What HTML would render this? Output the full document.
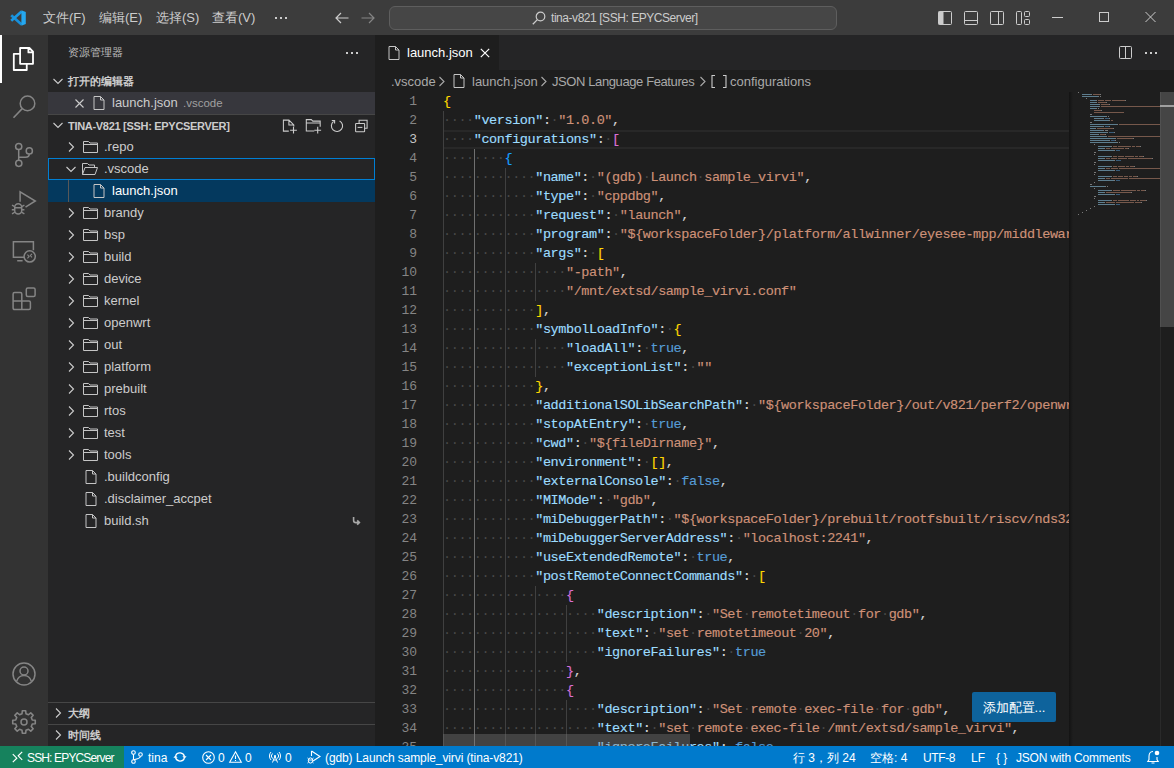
<!DOCTYPE html>
<html><head><meta charset="utf-8">
<style>
*{margin:0;padding:0;box-sizing:border-box}
html,body{width:1174px;height:768px;overflow:hidden;background:#1e1e1e;font-family:"Liberation Sans",sans-serif;color:#cccccc}
.abs{position:absolute}
svg{position:absolute;overflow:visible}
#title{position:absolute;left:0;top:0;width:1174px;height:35px;background:#3c3c3c}
.menu{position:absolute;top:0;height:35px;line-height:35px;font-size:13px;color:#cccccc}
#act{position:absolute;left:0;top:35px;width:48px;height:711px;background:#333333}
#side{position:absolute;left:48px;top:35px;width:327px;height:711px;background:#252526}
#tabs{position:absolute;left:375px;top:35px;width:799px;height:35px;background:#252526}
#status{position:absolute;left:0;top:746px;width:1174px;height:22px;background:#007acc;color:#ffffff;font-size:12px}
.st{position:absolute;top:1px;height:22px;line-height:22px;white-space:nowrap}
.row{position:absolute;left:0;width:327px;height:22px;line-height:22px;font-size:13px;color:#cccccc;white-space:nowrap}
.lbl{position:absolute;top:0}
.hdr .lbl{top:0}
.hdr{position:absolute;left:0;width:327px;height:22px;line-height:22px;font-size:11px;font-weight:bold;color:#cccccc;white-space:nowrap}
.ln{position:absolute;left:68px;height:19px;line-height:19px;font-family:"Liberation Mono",monospace;font-size:13.5px;letter-spacing:-0.42px;white-space:pre;color:#d4d4d4;-webkit-text-stroke:0.15px currentColor}
.ln i{font-style:normal;color:#484848;-webkit-text-stroke:0}
.num{position:absolute;left:380px;width:37px;text-align:right;height:19px;line-height:19px;font-family:"Liberation Mono",monospace;font-size:13px;color:#858585}
.num.act{color:#c6c6c6}
.guide{position:absolute;width:1px;background:#404040}
.guide.act{background:#707070}
.mm{position:absolute;height:1px;opacity:0.5}
#clip{position:absolute;left:375px;top:92px;width:694px;height:654px;overflow:hidden}
</style></head><body>

<!-- TITLE BAR -->
<div id="title">
  <svg style="left:10px;top:10px" width="16" height="16" viewBox="0 0 16 16"><path d="M1.2 5.2 L11.6 14.6" stroke="#1790dc" stroke-width="2.7"/><path d="M1.2 10.8 L11.6 1.4" stroke="#1a98e4" stroke-width="2.7"/><path d="M11.4 0.2 L15.8 2 V14 L11.4 15.8 Z" fill="#25a8f0"/></svg>
  <div class="menu" style="left:43px">文件(F)</div>
  <div class="menu" style="left:99px">编辑(E)</div>
  <div class="menu" style="left:156px">选择(S)</div>
  <div class="menu" style="left:212px">查看(V)</div>
  <svg style="left:275px;top:17px" width="12" height="2" viewBox="0 0 12 2"><rect x="0" y="0" width="2" height="2" fill="#cccccc"/><rect x="5" y="0" width="2" height="2" fill="#cccccc"/><rect x="10" y="0" width="2" height="2" fill="#cccccc"/></svg>
  <svg style="left:335px;top:12px" width="14" height="12" viewBox="0 0 14 12"><path d="M6 1 L1 6 L6 11 M1 6 H13.5" stroke="#cccccc" stroke-width="1.2" fill="none"/></svg>
  <svg style="left:361px;top:12px" width="14" height="12" viewBox="0 0 14 12"><path d="M8 1 L13 6 L8 11 M13 6 H0.5" stroke="#858585" stroke-width="1.2" fill="none"/></svg>
  <div class="abs" style="left:389px;top:6px;width:448px;height:24px;border:1px solid #5e5e5e;border-radius:6px;background:#464646"></div>
  <svg style="left:532px;top:11px" width="14" height="14" viewBox="0 0 14 14"><circle cx="8.5" cy="5.5" r="4.3" stroke="#cccccc" stroke-width="1.2" fill="none"/><path d="M5.4 8.6 L0.8 13.2" stroke="#cccccc" stroke-width="1.3"/></svg>
  <div class="menu" style="left:551px;top:1px;font-size:12px;letter-spacing:-0.45px">tina-v821 [SSH: EPYCServer]</div>
  <!-- layout icons -->
  <svg style="left:938px;top:11px" width="14" height="14" viewBox="0 0 14 14"><rect x="0.5" y="0.5" width="13" height="13" rx="1" stroke="#cccccc" fill="none"/><rect x="0.5" y="0.5" width="5" height="13" fill="#cccccc"/></svg>
  <svg style="left:964px;top:11px" width="14" height="14" viewBox="0 0 14 14"><rect x="0.5" y="0.5" width="13" height="13" rx="1" stroke="#cccccc" fill="none"/><path d="M0.5 9.5 H13.5" stroke="#cccccc"/></svg>
  <svg style="left:990px;top:11px" width="14" height="14" viewBox="0 0 14 14"><rect x="0.5" y="0.5" width="13" height="13" rx="1" stroke="#cccccc" fill="none"/><path d="M8.5 0.5 V13.5" stroke="#cccccc"/></svg>
  <svg style="left:1016px;top:11px" width="14" height="14" viewBox="0 0 14 14"><rect x="0.5" y="0.5" width="5" height="13" rx="1" stroke="#cccccc" fill="none"/><rect x="8.5" y="0.5" width="5" height="5" rx="1" stroke="#cccccc" fill="none"/><rect x="8.5" y="8.5" width="5" height="5" rx="1" stroke="#cccccc" fill="none"/></svg>
  <svg style="left:1052px;top:17px" width="11" height="1" viewBox="0 0 11 1"><path d="M0 0.5 H11" stroke="#cccccc"/></svg>
  <svg style="left:1099px;top:12px" width="10" height="10" viewBox="0 0 10 10"><rect x="0.5" y="0.5" width="9" height="9" stroke="#cccccc" fill="none"/></svg>
  <svg style="left:1145px;top:12px" width="11" height="10" viewBox="0 0 11 10"><path d="M0.5 0 L10.5 10 M10.5 0 L0.5 10" stroke="#cccccc" fill="none"/></svg>
</div>

<!-- ACTIVITY BAR -->
<div id="act">
  <div class="abs" style="left:0;top:0;width:2px;height:48px;background:#ffffff"></div>
  <svg style="left:12px;top:12px" width="24" height="24" viewBox="0 0 24 24"><path d="M8.1 1 H17.4 L21 4.6 V16.8 H8.1 Z M16.4 1 V5.4 H21 M8.1 6.8 H1.8 V23 H14.75 V16.8" stroke="#ffffff" stroke-width="1.8" fill="none" stroke-linejoin="round"/></svg>
  <svg style="left:12px;top:60px" width="24" height="24" viewBox="0 0 24 24"><circle cx="15.5" cy="8.4" r="7.3" stroke="#858585" stroke-width="1.5" fill="none"/><path d="M10.2 13.6 L1.5 22.8" stroke="#858585" stroke-width="1.6"/></svg>
  <svg style="left:12px;top:108px" width="24" height="24" viewBox="0 0 24 24"><circle cx="6.7" cy="3.5" r="3.1" stroke="#858585" stroke-width="1.5" fill="none"/><circle cx="6.8" cy="20.3" r="3.1" stroke="#858585" stroke-width="1.5" fill="none"/><circle cx="17.3" cy="7.9" r="3.1" stroke="#858585" stroke-width="1.5" fill="none"/><path d="M6.7 6.6 V17.2 M17.3 11 Q17.3 14.2 13.5 14.2 H6.7" stroke="#858585" stroke-width="1.5" fill="none"/></svg>
  <svg style="left:12px;top:156px" width="24" height="24" viewBox="0 0 24 24"><path d="M8.1 10.8 V0.9 L23.3 10 L13.5 16.2" stroke="#858585" stroke-width="1.5" fill="none" stroke-linejoin="miter"/><rect x="2.7" y="12.7" width="7" height="10.4" rx="3.5" stroke="#858585" stroke-width="1.5" fill="none"/><path d="M2.7 16.7 H9.7 M0 14.2 L2.7 15.6 M12.4 14.2 L9.7 15.6 M-0.2 18.8 H2.7 M9.7 18.8 H12.4 M0 22.8 L2.9 21.2 M12.4 22.8 L9.5 21.2" stroke="#858585" stroke-width="1.4" fill="none"/></svg>
  <svg style="left:12px;top:205px" width="24" height="24" viewBox="0 0 24 24"><path d="M12 17.25 H1.4 V1.8 H21.4 V10.2 M5.2 20.8 H10.6" stroke="#858585" stroke-width="1.5" fill="none"/><circle cx="17.7" cy="16.4" r="5.6" stroke="#858585" stroke-width="1.5" fill="none"/><path d="M15.4 14.6 L17.1 16.4 L15.4 18.3 M20 13.8 L18.3 15.6 L20 17.4" stroke="#858585" stroke-width="1.1" fill="none"/></svg>
  <svg style="left:12px;top:252px" width="24" height="24" viewBox="0 0 24 24"><path d="M2.6 5.4 H8.3 Q9.8 5.4 9.8 6.9 V14.1 H17 Q18.4 14.1 18.4 15.5 V21.1 Q18.4 22.6 17 22.6 H2.6 Q1.1 22.6 1.1 21.1 V6.9 Q1.1 5.4 2.6 5.4 Z M1.1 14.1 H9.8 V22.6" stroke="#858585" stroke-width="1.5" fill="none"/><rect x="14.3" y="1" width="8.8" height="8.5" rx="1.5" stroke="#858585" stroke-width="1.5" fill="none"/></svg>
  <svg style="left:12px;top:627px" width="24" height="24" viewBox="0 0 24 24"><circle cx="12" cy="12" r="11" stroke="#858585" stroke-width="1.5" fill="none"/><circle cx="12" cy="9" r="4" stroke="#858585" stroke-width="1.5" fill="none"/><path d="M4.5 19.5 C6 15 9 13.5 12 13.5 C15 13.5 18 15 19.5 19.5" stroke="#858585" stroke-width="1.5" fill="none"/></svg>
  <svg style="left:12px;top:675px" width="24" height="24" viewBox="0 0 24 24"><path d="M10.02 3.73 L10.31 0.73 L13.69 0.73 L13.98 3.73 L16.44 4.75 L18.77 2.83 L21.17 5.23 L19.25 7.56 L20.27 10.02 L23.27 10.31 L23.27 13.69 L20.27 13.98 L19.25 16.44 L21.17 18.77 L18.77 21.17 L16.44 19.25 L13.98 20.27 L13.69 23.27 L10.31 23.27 L10.02 20.27 L7.56 19.25 L5.23 21.17 L2.83 18.77 L4.75 16.44 L3.73 13.98 L0.73 13.69 L0.73 10.31 L3.73 10.02 L4.75 7.56 L2.83 5.23 L5.23 2.83 L7.56 4.75 Z" stroke="#858585" stroke-width="1.6" fill="none" stroke-linejoin="round"/><circle cx="12" cy="12" r="3" stroke="#858585" stroke-width="1.5" fill="none"/></svg>
</div>

<!-- SIDEBAR -->
<div id="side">
  <div class="abs" style="left:20px;top:0;height:35px;line-height:35px;font-size:11px;color:#bbbbbb">资源管理器</div>
  <svg style="left:298px;top:17px" width="12" height="2" viewBox="0 0 12 2"><rect x="0" y="0" width="2" height="2" fill="#cccccc"/><rect x="5" y="0" width="2" height="2" fill="#cccccc"/><rect x="10" y="0" width="2" height="2" fill="#cccccc"/></svg>
  <div class="hdr" style="top:35px">
    <svg style="left:2px;top:3px" width="16" height="16" viewBox="0 0 16 16"><path d="M3.5 6 L8 10.5 L12.5 6" stroke="#cccccc" stroke-width="1.1" fill="none"/></svg>
    <span class="lbl" style="left:20px">打开的编辑器</span>
  </div>
  <div class="row" style="top:57px;background:#37373d">
    <svg style="left:27px;top:7px" width="9" height="9" viewBox="0 0 9 9"><path d="M0.5 0.5 L8.5 8.5 M8.5 0.5 L0.5 8.5" stroke="#cccccc" stroke-width="1.1" fill="none"/></svg>
    <svg style="left:45px;top:4px" width="12" height="14" viewBox="0 0 12 14"><path d="M1 0.5 H7.5 L11 4 V13.5 H1 Z M7.5 0.5 V4 H11" stroke="#c5c5c5" stroke-width="1" fill="none"/></svg>
    <span class="lbl" style="left:64px">launch.json</span>
    <span class="lbl" style="left:135px;font-size:11.5px;color:#a0a0a0">.vscode</span>
  </div>
  <div class="abs" style="left:0;top:79px;width:327px;height:1px;background:#464646"></div>
  <div class="hdr" style="top:79px">
    <svg style="left:2px;top:3px" width="16" height="16" viewBox="0 0 16 16"><path d="M3.5 6 L8 10.5 L12.5 6" stroke="#cccccc" stroke-width="1.1" fill="none"/></svg>
    <span class="lbl" style="left:20px;top:1px;letter-spacing:-0.3px">TINA-V821 [SSH: EPYCSERVER]</span>
    <svg style="left:234px;top:4px" width="16" height="16" viewBox="0 0 16 16"><path d="M6.8 13.1 H1.4 V2.1 H6.9 L11.8 7 V8.6 M6.9 2.1 V7 H11.8" stroke="#cccccc" stroke-width="1.05" fill="none"/><path d="M11.5 8.8 V15.6 M8.1 12.2 H14.9" stroke="#cccccc" stroke-width="1.1"/></svg>
    <svg style="left:257px;top:4px" width="17" height="16" viewBox="0 0 17 16"><path d="M9.3 13 H1.3 V1.6 H6.3 L7.8 3.1 H15.2 V8.8 M1.3 4.9 H15.2" stroke="#cccccc" stroke-width="1.05" fill="none"/><path d="M12.7 8.8 V15.6 M9.3 12.2 H16.1" stroke="#cccccc" stroke-width="1.1"/></svg>
    <svg style="left:282px;top:4px" width="15" height="16" viewBox="0 0 15 16"><path d="M3.6 3.4 A5.6 5.6 0 1 0 9.6 2.9" stroke="#cccccc" stroke-width="1.1" fill="none"/><path d="M1.8 2.5 H4.6 V5.4" stroke="#cccccc" stroke-width="1.1" fill="none"/></svg>
    <svg style="left:307px;top:5px" width="14" height="14" viewBox="0 0 14 14"><path d="M4.1 3.9 V1.3 H12.1 V9.3 H9.6" stroke="#cccccc" stroke-width="1.05" fill="none"/><rect x="0.6" y="4.5" width="9" height="8.3" rx="0.6" stroke="#cccccc" stroke-width="1.05" fill="none"/><path d="M2.6 8.4 H7.4" stroke="#cccccc" stroke-width="1.05"/></svg>
  </div>
  <div class="row" style="top:101px;"><svg style="left:15px;top:3px" width="16" height="16" viewBox="0 0 16 16"><path d="M6 3.5 L10.5 8 L6 12.5" stroke="#cccccc" stroke-width="1.1" fill="none"/></svg><svg style="left:35px;top:5px" width="15" height="12" viewBox="0 0 15 12"><path d="M0.5 0.5 H5.5 L7 2 H14.5 V11.5 H0.5 Z M0.5 3.5 H14.5" stroke="#c5c5c5" stroke-width="1" fill="none"/></svg><span class="lbl" style="left:56px">.repo</span></div>
  <div class="row" style="top:123px;outline:1px solid #007fd4;outline-offset:-1px;"><svg style="left:15px;top:3px" width="16" height="16" viewBox="0 0 16 16"><path d="M3.5 6 L8 10.5 L12.5 6" stroke="#cccccc" stroke-width="1.1" fill="none"/></svg><svg style="left:34px;top:5px" width="16" height="12" viewBox="0 0 16 12"><path d="M0.5 11.5 V0.5 H5.5 L7 2 H12.5 V4.5 M0.5 11.5 L3 4.5 H15.5 L13 11.5 Z" stroke="#c5c5c5" stroke-width="1" fill="none"/></svg><span class="lbl" style="left:56px">.vscode</span></div>
  <div class="row" style="top:145px;background:#04395e;"><div class="abs" style="left:20px;top:0;width:1px;height:22px;background:#585858"></div><svg style="left:45px;top:4px" width="12" height="14" viewBox="0 0 12 14"><path d="M1 0.5 H7.5 L11 4 V13.5 H1 Z M7.5 0.5 V4 H11" stroke="#c5c5c5" stroke-width="1" fill="none"/></svg><span class="lbl" style="left:64px;color:#ffffff">launch.json</span></div>
  <div class="row" style="top:167px;"><svg style="left:15px;top:3px" width="16" height="16" viewBox="0 0 16 16"><path d="M6 3.5 L10.5 8 L6 12.5" stroke="#cccccc" stroke-width="1.1" fill="none"/></svg><svg style="left:35px;top:5px" width="15" height="12" viewBox="0 0 15 12"><path d="M0.5 0.5 H5.5 L7 2 H14.5 V11.5 H0.5 Z M0.5 3.5 H14.5" stroke="#c5c5c5" stroke-width="1" fill="none"/></svg><span class="lbl" style="left:56px">brandy</span></div>
  <div class="row" style="top:189px;"><svg style="left:15px;top:3px" width="16" height="16" viewBox="0 0 16 16"><path d="M6 3.5 L10.5 8 L6 12.5" stroke="#cccccc" stroke-width="1.1" fill="none"/></svg><svg style="left:35px;top:5px" width="15" height="12" viewBox="0 0 15 12"><path d="M0.5 0.5 H5.5 L7 2 H14.5 V11.5 H0.5 Z M0.5 3.5 H14.5" stroke="#c5c5c5" stroke-width="1" fill="none"/></svg><span class="lbl" style="left:56px">bsp</span></div>
  <div class="row" style="top:211px;"><svg style="left:15px;top:3px" width="16" height="16" viewBox="0 0 16 16"><path d="M6 3.5 L10.5 8 L6 12.5" stroke="#cccccc" stroke-width="1.1" fill="none"/></svg><svg style="left:35px;top:5px" width="15" height="12" viewBox="0 0 15 12"><path d="M0.5 0.5 H5.5 L7 2 H14.5 V11.5 H0.5 Z M0.5 3.5 H14.5" stroke="#c5c5c5" stroke-width="1" fill="none"/></svg><span class="lbl" style="left:56px">build</span></div>
  <div class="row" style="top:233px;"><svg style="left:15px;top:3px" width="16" height="16" viewBox="0 0 16 16"><path d="M6 3.5 L10.5 8 L6 12.5" stroke="#cccccc" stroke-width="1.1" fill="none"/></svg><svg style="left:35px;top:5px" width="15" height="12" viewBox="0 0 15 12"><path d="M0.5 0.5 H5.5 L7 2 H14.5 V11.5 H0.5 Z M0.5 3.5 H14.5" stroke="#c5c5c5" stroke-width="1" fill="none"/></svg><span class="lbl" style="left:56px">device</span></div>
  <div class="row" style="top:255px;"><svg style="left:15px;top:3px" width="16" height="16" viewBox="0 0 16 16"><path d="M6 3.5 L10.5 8 L6 12.5" stroke="#cccccc" stroke-width="1.1" fill="none"/></svg><svg style="left:35px;top:5px" width="15" height="12" viewBox="0 0 15 12"><path d="M0.5 0.5 H5.5 L7 2 H14.5 V11.5 H0.5 Z M0.5 3.5 H14.5" stroke="#c5c5c5" stroke-width="1" fill="none"/></svg><span class="lbl" style="left:56px">kernel</span></div>
  <div class="row" style="top:277px;"><svg style="left:15px;top:3px" width="16" height="16" viewBox="0 0 16 16"><path d="M6 3.5 L10.5 8 L6 12.5" stroke="#cccccc" stroke-width="1.1" fill="none"/></svg><svg style="left:35px;top:5px" width="15" height="12" viewBox="0 0 15 12"><path d="M0.5 0.5 H5.5 L7 2 H14.5 V11.5 H0.5 Z M0.5 3.5 H14.5" stroke="#c5c5c5" stroke-width="1" fill="none"/></svg><span class="lbl" style="left:56px">openwrt</span></div>
  <div class="row" style="top:299px;"><svg style="left:15px;top:3px" width="16" height="16" viewBox="0 0 16 16"><path d="M6 3.5 L10.5 8 L6 12.5" stroke="#cccccc" stroke-width="1.1" fill="none"/></svg><svg style="left:35px;top:5px" width="15" height="12" viewBox="0 0 15 12"><path d="M0.5 0.5 H5.5 L7 2 H14.5 V11.5 H0.5 Z M0.5 3.5 H14.5" stroke="#c5c5c5" stroke-width="1" fill="none"/></svg><span class="lbl" style="left:56px">out</span></div>
  <div class="row" style="top:321px;"><svg style="left:15px;top:3px" width="16" height="16" viewBox="0 0 16 16"><path d="M6 3.5 L10.5 8 L6 12.5" stroke="#cccccc" stroke-width="1.1" fill="none"/></svg><svg style="left:35px;top:5px" width="15" height="12" viewBox="0 0 15 12"><path d="M0.5 0.5 H5.5 L7 2 H14.5 V11.5 H0.5 Z M0.5 3.5 H14.5" stroke="#c5c5c5" stroke-width="1" fill="none"/></svg><span class="lbl" style="left:56px">platform</span></div>
  <div class="row" style="top:343px;"><svg style="left:15px;top:3px" width="16" height="16" viewBox="0 0 16 16"><path d="M6 3.5 L10.5 8 L6 12.5" stroke="#cccccc" stroke-width="1.1" fill="none"/></svg><svg style="left:35px;top:5px" width="15" height="12" viewBox="0 0 15 12"><path d="M0.5 0.5 H5.5 L7 2 H14.5 V11.5 H0.5 Z M0.5 3.5 H14.5" stroke="#c5c5c5" stroke-width="1" fill="none"/></svg><span class="lbl" style="left:56px">prebuilt</span></div>
  <div class="row" style="top:365px;"><svg style="left:15px;top:3px" width="16" height="16" viewBox="0 0 16 16"><path d="M6 3.5 L10.5 8 L6 12.5" stroke="#cccccc" stroke-width="1.1" fill="none"/></svg><svg style="left:35px;top:5px" width="15" height="12" viewBox="0 0 15 12"><path d="M0.5 0.5 H5.5 L7 2 H14.5 V11.5 H0.5 Z M0.5 3.5 H14.5" stroke="#c5c5c5" stroke-width="1" fill="none"/></svg><span class="lbl" style="left:56px">rtos</span></div>
  <div class="row" style="top:387px;"><svg style="left:15px;top:3px" width="16" height="16" viewBox="0 0 16 16"><path d="M6 3.5 L10.5 8 L6 12.5" stroke="#cccccc" stroke-width="1.1" fill="none"/></svg><svg style="left:35px;top:5px" width="15" height="12" viewBox="0 0 15 12"><path d="M0.5 0.5 H5.5 L7 2 H14.5 V11.5 H0.5 Z M0.5 3.5 H14.5" stroke="#c5c5c5" stroke-width="1" fill="none"/></svg><span class="lbl" style="left:56px">test</span></div>
  <div class="row" style="top:409px;"><svg style="left:15px;top:3px" width="16" height="16" viewBox="0 0 16 16"><path d="M6 3.5 L10.5 8 L6 12.5" stroke="#cccccc" stroke-width="1.1" fill="none"/></svg><svg style="left:35px;top:5px" width="15" height="12" viewBox="0 0 15 12"><path d="M0.5 0.5 H5.5 L7 2 H14.5 V11.5 H0.5 Z M0.5 3.5 H14.5" stroke="#c5c5c5" stroke-width="1" fill="none"/></svg><span class="lbl" style="left:56px">tools</span></div>
  <div class="row" style="top:431px;"><svg style="left:37px;top:4px" width="12" height="14" viewBox="0 0 12 14"><path d="M1 0.5 H7.5 L11 4 V13.5 H1 Z M7.5 0.5 V4 H11" stroke="#c5c5c5" stroke-width="1" fill="none"/></svg><span class="lbl" style="left:56px">.buildconfig</span></div>
  <div class="row" style="top:453px;"><svg style="left:37px;top:4px" width="12" height="14" viewBox="0 0 12 14"><path d="M1 0.5 H7.5 L11 4 V13.5 H1 Z M7.5 0.5 V4 H11" stroke="#c5c5c5" stroke-width="1" fill="none"/></svg><span class="lbl" style="left:56px">.disclaimer_accpet</span></div>
  <div class="row" style="top:475px;"><svg style="left:37px;top:4px" width="12" height="14" viewBox="0 0 12 14"><path d="M1 0.5 H7.5 L11 4 V13.5 H1 Z M7.5 0.5 V4 H11" stroke="#c5c5c5" stroke-width="1" fill="none"/></svg><span class="lbl" style="left:56px">build.sh</span><svg style="left:304px;top:6px" width="9" height="10" viewBox="0 0 9 10"><path d="M1.6 1 V4.2 Q1.6 6.6 4 6.6 H7.2 M5.2 4.4 L7.4 6.6 L5.2 8.8" stroke="#a8a8a8" stroke-width="1.6" fill="none"/></svg></div>
  <div class="abs" style="left:0;top:667px;width:327px;height:1px;background:#464646"></div>
  <div class="hdr" style="top:667px">
    <svg style="left:2px;top:3px" width="16" height="16" viewBox="0 0 16 16"><path d="M6 3.5 L10.5 8 L6 12.5" stroke="#cccccc" stroke-width="1.1" fill="none"/></svg>
    <span class="lbl" style="left:20px">大纲</span>
  </div>
  <div class="abs" style="left:0;top:689px;width:327px;height:1px;background:#464646"></div>
  <div class="hdr" style="top:689px">
    <svg style="left:2px;top:3px" width="16" height="16" viewBox="0 0 16 16"><path d="M6 3.5 L10.5 8 L6 12.5" stroke="#cccccc" stroke-width="1.1" fill="none"/></svg>
    <span class="lbl" style="left:20px">时间线</span>
  </div>
</div>

<!-- TABS -->
<div id="tabs">
  <div class="abs" style="left:0;top:0;width:124px;height:35px;background:#1e1e1e"></div>
  <svg style="left:13px;top:11px" width="12" height="14" viewBox="0 0 12 14"><path d="M1 0.5 H7.5 L11 4 V13.5 H1 Z M7.5 0.5 V4 H11" stroke="#c5c5c5" stroke-width="1" fill="none"/></svg>
  <div class="abs" style="left:32px;top:0;height:35px;line-height:35px;font-size:13px;color:#ffffff">launch.json</div>
  <svg style="left:105px;top:13px" width="10" height="10" viewBox="0 0 10 10"><path d="M0.8 0.8 L9.2 9.2 M9.2 0.8 L0.8 9.2" stroke="#ffffff" stroke-width="1.2" fill="none"/></svg>
  <svg style="left:743px;top:11px" width="16" height="14" viewBox="0 0 16 14"><rect x="1.5" y="0.5" width="12" height="12" rx="1" stroke="#cccccc" stroke-width="1" fill="none"/><path d="M7.5 0.5 V12.5" stroke="#cccccc" stroke-width="1"/></svg>
  <svg style="left:770px;top:17px" width="12" height="2" viewBox="0 0 12 2"><rect x="0" y="0" width="2" height="2" fill="#cccccc"/><rect x="5" y="0" width="2" height="2" fill="#cccccc"/><rect x="10" y="0" width="2" height="2" fill="#cccccc"/></svg>
</div>
<!-- BREADCRUMBS -->
<div class="abs" style="left:375px;top:70px;width:799px;height:22px;font-size:13px;color:#a9a9a9;line-height:24px;white-space:nowrap">
  <span class="abs" style="left:16px">.vscode</span>
  <svg style="left:63px;top:6px" width="8" height="11" viewBox="0 0 8 11"><path d="M1.5 1 L6 5.5 L1.5 10" stroke="#a9a9a9" stroke-width="1.1" fill="none"/></svg>
  <svg style="left:78px;top:4px" width="12" height="14" viewBox="0 0 12 14"><path d="M1 0.5 H7.5 L11 4 V13.5 H1 Z M7.5 0.5 V4 H11" stroke="#c5c5c5" stroke-width="1" fill="none"/></svg>
  <span class="abs" style="left:97px">launch.json</span>
  <svg style="left:165px;top:6px" width="8" height="11" viewBox="0 0 8 11"><path d="M1.5 1 L6 5.5 L1.5 10" stroke="#a9a9a9" stroke-width="1.1" fill="none"/></svg>
  <span class="abs" style="left:177px;letter-spacing:-0.4px">JSON Language Features</span>
  <svg style="left:324px;top:6px" width="8" height="11" viewBox="0 0 8 11"><path d="M1.5 1 L6 5.5 L1.5 10" stroke="#a9a9a9" stroke-width="1.1" fill="none"/></svg>
  <svg style="left:336px;top:5px" width="16" height="13" viewBox="0 0 16 13"><path d="M4 0.5 H1 V12.5 H4 M12 0.5 H15 V12.5 H12" stroke="#cccccc" stroke-width="1.1" fill="none"/></svg>
  <span class="abs" style="left:355px">configurations</span>
</div>

<!-- EDITOR -->
<div class="abs" style="left:444px;top:130px;width:625px;height:19px;border-top:2px solid #282828;border-bottom:2px solid #282828"></div>
<div class="num" style="top:92px">1</div>
<div class="num" style="top:111px">2</div>
<div class="num act" style="top:130px">3</div>
<div class="num" style="top:149px">4</div>
<div class="num" style="top:168px">5</div>
<div class="num" style="top:187px">6</div>
<div class="num" style="top:206px">7</div>
<div class="num" style="top:225px">8</div>
<div class="num" style="top:244px">9</div>
<div class="num" style="top:263px">10</div>
<div class="num" style="top:282px">11</div>
<div class="num" style="top:301px">12</div>
<div class="num" style="top:320px">13</div>
<div class="num" style="top:339px">14</div>
<div class="num" style="top:358px">15</div>
<div class="num" style="top:377px">16</div>
<div class="num" style="top:396px">17</div>
<div class="num" style="top:415px">18</div>
<div class="num" style="top:434px">19</div>
<div class="num" style="top:453px">20</div>
<div class="num" style="top:472px">21</div>
<div class="num" style="top:491px">22</div>
<div class="num" style="top:510px">23</div>
<div class="num" style="top:529px">24</div>
<div class="num" style="top:548px">25</div>
<div class="num" style="top:567px">26</div>
<div class="num" style="top:586px">27</div>
<div class="num" style="top:605px">28</div>
<div class="num" style="top:624px">29</div>
<div class="num" style="top:643px">30</div>
<div class="num" style="top:662px">31</div>
<div class="num" style="top:681px">32</div>
<div class="num" style="top:700px">33</div>
<div class="num" style="top:719px">34</div>
<div class="num" style="top:738px">35</div>
<div class="num" style="top:757px">36</div>
<div id="clip"><div class="guide" style="left:68px;top:19px;height:665px"></div>
<div class="guide act" style="left:99px;top:57px;height:627px"></div>
<div class="guide" style="left:130px;top:76px;height:608px"></div>
<div class="guide" style="left:160px;top:171px;height:38px"></div>
<div class="guide" style="left:160px;top:247px;height:38px"></div>
<div class="guide" style="left:160px;top:494px;height:190px"></div>
<div class="guide" style="left:191px;top:513px;height:57px"></div>
<div class="guide" style="left:191px;top:608px;height:57px"></div>
<div class="ln" style="top:0px"><span style="color:#ffd700">{</span></div>
<div class="ln" style="top:19px"><i>·</i><i>·</i><i>·</i><i>·</i><span style="color:#9cdcfe">&quot;version&quot;</span><span style="color:#d4d4d4">:</span><i>·</i><span style="color:#ce9178">&quot;1.0.0&quot;</span><span style="color:#d4d4d4">,</span></div>
<div class="ln" style="top:38px"><i>·</i><i>·</i><i>·</i><i>·</i><span style="color:#9cdcfe">&quot;configurations&quot;</span><span style="color:#d4d4d4">:</span><i>·</i><span style="color:#da70d6">[</span></div>
<div class="ln" style="top:57px"><i>·</i><i>·</i><i>·</i><i>·</i><i>·</i><i>·</i><i>·</i><i>·</i><span style="color:#179fff">{</span></div>
<div class="ln" style="top:76px"><i>·</i><i>·</i><i>·</i><i>·</i><i>·</i><i>·</i><i>·</i><i>·</i><i>·</i><i>·</i><i>·</i><i>·</i><span style="color:#9cdcfe">&quot;name&quot;</span><span style="color:#d4d4d4">:</span><i>·</i><span style="color:#ce9178">&quot;(gdb)</span><i>·</i><span style="color:#ce9178">Launch</span><i>·</i><span style="color:#ce9178">sample_virvi&quot;</span><span style="color:#d4d4d4">,</span></div>
<div class="ln" style="top:95px"><i>·</i><i>·</i><i>·</i><i>·</i><i>·</i><i>·</i><i>·</i><i>·</i><i>·</i><i>·</i><i>·</i><i>·</i><span style="color:#9cdcfe">&quot;type&quot;</span><span style="color:#d4d4d4">:</span><i>·</i><span style="color:#ce9178">&quot;cppdbg&quot;</span><span style="color:#d4d4d4">,</span></div>
<div class="ln" style="top:114px"><i>·</i><i>·</i><i>·</i><i>·</i><i>·</i><i>·</i><i>·</i><i>·</i><i>·</i><i>·</i><i>·</i><i>·</i><span style="color:#9cdcfe">&quot;request&quot;</span><span style="color:#d4d4d4">:</span><i>·</i><span style="color:#ce9178">&quot;launch&quot;</span><span style="color:#d4d4d4">,</span></div>
<div class="ln" style="top:133px"><i>·</i><i>·</i><i>·</i><i>·</i><i>·</i><i>·</i><i>·</i><i>·</i><i>·</i><i>·</i><i>·</i><i>·</i><span style="color:#9cdcfe">&quot;program&quot;</span><span style="color:#d4d4d4">:</span><i>·</i><span style="color:#ce9178">&quot;${workspaceFolder}/platform/allwinner/eyesee-mpp/middleware/sample/sample_virvi&quot;</span><span style="color:#d4d4d4">,</span></div>
<div class="ln" style="top:152px"><i>·</i><i>·</i><i>·</i><i>·</i><i>·</i><i>·</i><i>·</i><i>·</i><i>·</i><i>·</i><i>·</i><i>·</i><span style="color:#9cdcfe">&quot;args&quot;</span><span style="color:#d4d4d4">:</span><i>·</i><span style="color:#ffd700">[</span></div>
<div class="ln" style="top:171px"><i>·</i><i>·</i><i>·</i><i>·</i><i>·</i><i>·</i><i>·</i><i>·</i><i>·</i><i>·</i><i>·</i><i>·</i><i>·</i><i>·</i><i>·</i><i>·</i><span style="color:#ce9178">&quot;-path&quot;</span><span style="color:#d4d4d4">,</span></div>
<div class="ln" style="top:190px"><i>·</i><i>·</i><i>·</i><i>·</i><i>·</i><i>·</i><i>·</i><i>·</i><i>·</i><i>·</i><i>·</i><i>·</i><i>·</i><i>·</i><i>·</i><i>·</i><span style="color:#ce9178">&quot;/mnt/extsd/sample_virvi.conf&quot;</span></div>
<div class="ln" style="top:209px"><i>·</i><i>·</i><i>·</i><i>·</i><i>·</i><i>·</i><i>·</i><i>·</i><i>·</i><i>·</i><i>·</i><i>·</i><span style="color:#ffd700">]</span><span style="color:#d4d4d4">,</span></div>
<div class="ln" style="top:228px"><i>·</i><i>·</i><i>·</i><i>·</i><i>·</i><i>·</i><i>·</i><i>·</i><i>·</i><i>·</i><i>·</i><i>·</i><span style="color:#9cdcfe">&quot;symbolLoadInfo&quot;</span><span style="color:#d4d4d4">:</span><i>·</i><span style="color:#ffd700">{</span></div>
<div class="ln" style="top:247px"><i>·</i><i>·</i><i>·</i><i>·</i><i>·</i><i>·</i><i>·</i><i>·</i><i>·</i><i>·</i><i>·</i><i>·</i><i>·</i><i>·</i><i>·</i><i>·</i><span style="color:#9cdcfe">&quot;loadAll&quot;</span><span style="color:#d4d4d4">:</span><i>·</i><span style="color:#569cd6">true</span><span style="color:#d4d4d4">,</span></div>
<div class="ln" style="top:266px"><i>·</i><i>·</i><i>·</i><i>·</i><i>·</i><i>·</i><i>·</i><i>·</i><i>·</i><i>·</i><i>·</i><i>·</i><i>·</i><i>·</i><i>·</i><i>·</i><span style="color:#9cdcfe">&quot;exceptionList&quot;</span><span style="color:#d4d4d4">:</span><i>·</i><span style="color:#ce9178">&quot;&quot;</span></div>
<div class="ln" style="top:285px"><i>·</i><i>·</i><i>·</i><i>·</i><i>·</i><i>·</i><i>·</i><i>·</i><i>·</i><i>·</i><i>·</i><i>·</i><span style="color:#ffd700">}</span><span style="color:#d4d4d4">,</span></div>
<div class="ln" style="top:304px"><i>·</i><i>·</i><i>·</i><i>·</i><i>·</i><i>·</i><i>·</i><i>·</i><i>·</i><i>·</i><i>·</i><i>·</i><span style="color:#9cdcfe">&quot;additionalSOLibSearchPath&quot;</span><span style="color:#d4d4d4">:</span><i>·</i><span style="color:#ce9178">&quot;${workspaceFolder}/out/v821/perf2/openwrt/staging_dir/target/rootfs/lib&quot;</span><span style="color:#d4d4d4">,</span></div>
<div class="ln" style="top:323px"><i>·</i><i>·</i><i>·</i><i>·</i><i>·</i><i>·</i><i>·</i><i>·</i><i>·</i><i>·</i><i>·</i><i>·</i><span style="color:#9cdcfe">&quot;stopAtEntry&quot;</span><span style="color:#d4d4d4">:</span><i>·</i><span style="color:#569cd6">true</span><span style="color:#d4d4d4">,</span></div>
<div class="ln" style="top:342px"><i>·</i><i>·</i><i>·</i><i>·</i><i>·</i><i>·</i><i>·</i><i>·</i><i>·</i><i>·</i><i>·</i><i>·</i><span style="color:#9cdcfe">&quot;cwd&quot;</span><span style="color:#d4d4d4">:</span><i>·</i><span style="color:#ce9178">&quot;${fileDirname}&quot;</span><span style="color:#d4d4d4">,</span></div>
<div class="ln" style="top:361px"><i>·</i><i>·</i><i>·</i><i>·</i><i>·</i><i>·</i><i>·</i><i>·</i><i>·</i><i>·</i><i>·</i><i>·</i><span style="color:#9cdcfe">&quot;environment&quot;</span><span style="color:#d4d4d4">:</span><i>·</i><span style="color:#ffd700">[</span><span style="color:#ffd700">]</span><span style="color:#d4d4d4">,</span></div>
<div class="ln" style="top:380px"><i>·</i><i>·</i><i>·</i><i>·</i><i>·</i><i>·</i><i>·</i><i>·</i><i>·</i><i>·</i><i>·</i><i>·</i><span style="color:#9cdcfe">&quot;externalConsole&quot;</span><span style="color:#d4d4d4">:</span><i>·</i><span style="color:#569cd6">false</span><span style="color:#d4d4d4">,</span></div>
<div class="ln" style="top:399px"><i>·</i><i>·</i><i>·</i><i>·</i><i>·</i><i>·</i><i>·</i><i>·</i><i>·</i><i>·</i><i>·</i><i>·</i><span style="color:#9cdcfe">&quot;MIMode&quot;</span><span style="color:#d4d4d4">:</span><i>·</i><span style="color:#ce9178">&quot;gdb&quot;</span><span style="color:#d4d4d4">,</span></div>
<div class="ln" style="top:418px"><i>·</i><i>·</i><i>·</i><i>·</i><i>·</i><i>·</i><i>·</i><i>·</i><i>·</i><i>·</i><i>·</i><i>·</i><span style="color:#9cdcfe">&quot;miDebuggerPath&quot;</span><span style="color:#d4d4d4">:</span><i>·</i><span style="color:#ce9178">&quot;${workspaceFolder}/prebuilt/rootfsbuilt/riscv/nds32le-linux-musl/bin/riscv32-linux-musl-gdb&quot;</span><span style="color:#d4d4d4">,</span></div>
<div class="ln" style="top:437px"><i>·</i><i>·</i><i>·</i><i>·</i><i>·</i><i>·</i><i>·</i><i>·</i><i>·</i><i>·</i><i>·</i><i>·</i><span style="color:#9cdcfe">&quot;miDebuggerServerAddress&quot;</span><span style="color:#d4d4d4">:</span><i>·</i><span style="color:#ce9178">&quot;localhost:2241&quot;</span><span style="color:#d4d4d4">,</span></div>
<div class="ln" style="top:456px"><i>·</i><i>·</i><i>·</i><i>·</i><i>·</i><i>·</i><i>·</i><i>·</i><i>·</i><i>·</i><i>·</i><i>·</i><span style="color:#9cdcfe">&quot;useExtendedRemote&quot;</span><span style="color:#d4d4d4">:</span><i>·</i><span style="color:#569cd6">true</span><span style="color:#d4d4d4">,</span></div>
<div class="ln" style="top:475px"><i>·</i><i>·</i><i>·</i><i>·</i><i>·</i><i>·</i><i>·</i><i>·</i><i>·</i><i>·</i><i>·</i><i>·</i><span style="color:#9cdcfe">&quot;postRemoteConnectCommands&quot;</span><span style="color:#d4d4d4">:</span><i>·</i><span style="color:#ffd700">[</span></div>
<div class="ln" style="top:494px"><i>·</i><i>·</i><i>·</i><i>·</i><i>·</i><i>·</i><i>·</i><i>·</i><i>·</i><i>·</i><i>·</i><i>·</i><i>·</i><i>·</i><i>·</i><i>·</i><span style="color:#da70d6">{</span></div>
<div class="ln" style="top:513px"><i>·</i><i>·</i><i>·</i><i>·</i><i>·</i><i>·</i><i>·</i><i>·</i><i>·</i><i>·</i><i>·</i><i>·</i><i>·</i><i>·</i><i>·</i><i>·</i><i>·</i><i>·</i><i>·</i><i>·</i><span style="color:#9cdcfe">&quot;description&quot;</span><span style="color:#d4d4d4">:</span><i>·</i><span style="color:#ce9178">&quot;Set</span><i>·</i><span style="color:#ce9178">remotetimeout</span><i>·</i><span style="color:#ce9178">for</span><i>·</i><span style="color:#ce9178">gdb&quot;</span><span style="color:#d4d4d4">,</span></div>
<div class="ln" style="top:532px"><i>·</i><i>·</i><i>·</i><i>·</i><i>·</i><i>·</i><i>·</i><i>·</i><i>·</i><i>·</i><i>·</i><i>·</i><i>·</i><i>·</i><i>·</i><i>·</i><i>·</i><i>·</i><i>·</i><i>·</i><span style="color:#9cdcfe">&quot;text&quot;</span><span style="color:#d4d4d4">:</span><i>·</i><span style="color:#ce9178">&quot;set</span><i>·</i><span style="color:#ce9178">remotetimeout</span><i>·</i><span style="color:#ce9178">20&quot;</span><span style="color:#d4d4d4">,</span></div>
<div class="ln" style="top:551px"><i>·</i><i>·</i><i>·</i><i>·</i><i>·</i><i>·</i><i>·</i><i>·</i><i>·</i><i>·</i><i>·</i><i>·</i><i>·</i><i>·</i><i>·</i><i>·</i><i>·</i><i>·</i><i>·</i><i>·</i><span style="color:#9cdcfe">&quot;ignoreFailures&quot;</span><span style="color:#d4d4d4">:</span><i>·</i><span style="color:#569cd6">true</span></div>
<div class="ln" style="top:570px"><i>·</i><i>·</i><i>·</i><i>·</i><i>·</i><i>·</i><i>·</i><i>·</i><i>·</i><i>·</i><i>·</i><i>·</i><i>·</i><i>·</i><i>·</i><i>·</i><span style="color:#da70d6">}</span><span style="color:#d4d4d4">,</span></div>
<div class="ln" style="top:589px"><i>·</i><i>·</i><i>·</i><i>·</i><i>·</i><i>·</i><i>·</i><i>·</i><i>·</i><i>·</i><i>·</i><i>·</i><i>·</i><i>·</i><i>·</i><i>·</i><span style="color:#da70d6">{</span></div>
<div class="ln" style="top:608px"><i>·</i><i>·</i><i>·</i><i>·</i><i>·</i><i>·</i><i>·</i><i>·</i><i>·</i><i>·</i><i>·</i><i>·</i><i>·</i><i>·</i><i>·</i><i>·</i><i>·</i><i>·</i><i>·</i><i>·</i><span style="color:#9cdcfe">&quot;description&quot;</span><span style="color:#d4d4d4">:</span><i>·</i><span style="color:#ce9178">&quot;Set</span><i>·</i><span style="color:#ce9178">remote</span><i>·</i><span style="color:#ce9178">exec-file</span><i>·</i><span style="color:#ce9178">for</span><i>·</i><span style="color:#ce9178">gdb&quot;</span><span style="color:#d4d4d4">,</span></div>
<div class="ln" style="top:627px"><i>·</i><i>·</i><i>·</i><i>·</i><i>·</i><i>·</i><i>·</i><i>·</i><i>·</i><i>·</i><i>·</i><i>·</i><i>·</i><i>·</i><i>·</i><i>·</i><i>·</i><i>·</i><i>·</i><i>·</i><span style="color:#9cdcfe">&quot;text&quot;</span><span style="color:#d4d4d4">:</span><i>·</i><span style="color:#ce9178">&quot;set</span><i>·</i><span style="color:#ce9178">remote</span><i>·</i><span style="color:#ce9178">exec-file</span><i>·</i><span style="color:#ce9178">/mnt/extsd/sample_virvi&quot;</span><span style="color:#d4d4d4">,</span></div>
<div class="ln" style="top:646px"><i>·</i><i>·</i><i>·</i><i>·</i><i>·</i><i>·</i><i>·</i><i>·</i><i>·</i><i>·</i><i>·</i><i>·</i><i>·</i><i>·</i><i>·</i><i>·</i><i>·</i><i>·</i><i>·</i><i>·</i><span style="color:#9cdcfe">&quot;ignoreFailures&quot;</span><span style="color:#d4d4d4">:</span><i>·</i><span style="color:#569cd6">false</span></div>
<div class="ln" style="top:665px"><i>·</i><i>·</i><i>·</i><i>·</i><i>·</i><i>·</i><i>·</i><i>·</i><i>·</i><i>·</i><i>·</i><i>·</i><i>·</i><i>·</i><i>·</i><i>·</i><span style="color:#da70d6">}</span><span style="color:#d4d4d4">,</span></div></div>

<!-- <div class="mm" style="left:1078.0px;top:92px;width:1.0px;background:#d4d4d4"></div>
<div class="mm" style="left:1082.0px;top:94px;width:9.0px;background:#9cdcfe"></div>
<div class="mm" style="left:1091.0px;top:94px;width:1.0px;background:#d4d4d4"></div>
<div class="mm" style="left:1093.0px;top:94px;width:7.0px;background:#ce9178"></div>
<div class="mm" style="left:1100.0px;top:94px;width:1.0px;background:#d4d4d4"></div>
<div class="mm" style="left:1082.0px;top:96px;width:16.0px;background:#9cdcfe"></div>
<div class="mm" style="left:1098.0px;top:96px;width:1.0px;background:#d4d4d4"></div>
<div class="mm" style="left:1100.0px;top:96px;width:1.0px;background:#d4d4d4"></div>
<div class="mm" style="left:1086.0px;top:98px;width:1.0px;background:#d4d4d4"></div>
<div class="mm" style="left:1090.0px;top:100px;width:6.0px;background:#9cdcfe"></div>
<div class="mm" style="left:1096.0px;top:100px;width:1.0px;background:#d4d4d4"></div>
<div class="mm" style="left:1098.0px;top:100px;width:6.0px;background:#ce9178"></div>
<div class="mm" style="left:1105.0px;top:100px;width:6.0px;background:#ce9178"></div>
<div class="mm" style="left:1112.0px;top:100px;width:13.0px;background:#ce9178"></div>
<div class="mm" style="left:1125.0px;top:100px;width:1.0px;background:#d4d4d4"></div>
<div class="mm" style="left:1090.0px;top:102px;width:6.0px;background:#9cdcfe"></div>
<div class="mm" style="left:1096.0px;top:102px;width:1.0px;background:#d4d4d4"></div>
<div class="mm" style="left:1098.0px;top:102px;width:8.0px;background:#ce9178"></div>
<div class="mm" style="left:1106.0px;top:102px;width:1.0px;background:#d4d4d4"></div>
<div class="mm" style="left:1090.0px;top:104px;width:9.0px;background:#9cdcfe"></div>
<div class="mm" style="left:1099.0px;top:104px;width:1.0px;background:#d4d4d4"></div>
<div class="mm" style="left:1101.0px;top:104px;width:8.0px;background:#ce9178"></div>
<div class="mm" style="left:1109.0px;top:104px;width:1.0px;background:#d4d4d4"></div>
<div class="mm" style="left:1090.0px;top:106px;width:9.0px;background:#9cdcfe"></div>
<div class="mm" style="left:1099.0px;top:106px;width:1.0px;background:#d4d4d4"></div>
<div class="mm" style="left:1101.0px;top:106px;width:59.0px;background:#ce9178"></div>
<div class="mm" style="left:1090.0px;top:108px;width:6.0px;background:#9cdcfe"></div>
<div class="mm" style="left:1096.0px;top:108px;width:1.0px;background:#d4d4d4"></div>
<div class="mm" style="left:1098.0px;top:108px;width:1.0px;background:#d4d4d4"></div>
<div class="mm" style="left:1094.0px;top:110px;width:7.0px;background:#ce9178"></div>
<div class="mm" style="left:1101.0px;top:110px;width:1.0px;background:#d4d4d4"></div>
<div class="mm" style="left:1094.0px;top:112px;width:30.0px;background:#ce9178"></div>
<div class="mm" style="left:1090.0px;top:114px;width:1.0px;background:#d4d4d4"></div>
<div class="mm" style="left:1091.0px;top:114px;width:1.0px;background:#d4d4d4"></div>
<div class="mm" style="left:1090.0px;top:116px;width:16.0px;background:#9cdcfe"></div>
<div class="mm" style="left:1106.0px;top:116px;width:1.0px;background:#d4d4d4"></div>
<div class="mm" style="left:1108.0px;top:116px;width:1.0px;background:#d4d4d4"></div>
<div class="mm" style="left:1094.0px;top:118px;width:9.0px;background:#9cdcfe"></div>
<div class="mm" style="left:1103.0px;top:118px;width:1.0px;background:#d4d4d4"></div>
<div class="mm" style="left:1105.0px;top:118px;width:4.0px;background:#569cd6"></div>
<div class="mm" style="left:1109.0px;top:118px;width:1.0px;background:#d4d4d4"></div>
<div class="mm" style="left:1094.0px;top:120px;width:15.0px;background:#9cdcfe"></div>
<div class="mm" style="left:1109.0px;top:120px;width:1.0px;background:#d4d4d4"></div>
<div class="mm" style="left:1111.0px;top:120px;width:2.0px;background:#ce9178"></div>
<div class="mm" style="left:1090.0px;top:122px;width:1.0px;background:#d4d4d4"></div>
<div class="mm" style="left:1091.0px;top:122px;width:1.0px;background:#d4d4d4"></div>
<div class="mm" style="left:1090.0px;top:124px;width:27.0px;background:#9cdcfe"></div>
<div class="mm" style="left:1117.0px;top:124px;width:1.0px;background:#d4d4d4"></div>
<div class="mm" style="left:1119.0px;top:124px;width:41.0px;background:#ce9178"></div>
<div class="mm" style="left:1090.0px;top:126px;width:13.0px;background:#9cdcfe"></div>
<div class="mm" style="left:1103.0px;top:126px;width:1.0px;background:#d4d4d4"></div>
<div class="mm" style="left:1105.0px;top:126px;width:4.0px;background:#569cd6"></div>
<div class="mm" style="left:1109.0px;top:126px;width:1.0px;background:#d4d4d4"></div>
<div class="mm" style="left:1090.0px;top:128px;width:5.0px;background:#9cdcfe"></div>
<div class="mm" style="left:1095.0px;top:128px;width:1.0px;background:#d4d4d4"></div>
<div class="mm" style="left:1097.0px;top:128px;width:16.0px;background:#ce9178"></div>
<div class="mm" style="left:1113.0px;top:128px;width:1.0px;background:#d4d4d4"></div>
<div class="mm" style="left:1090.0px;top:130px;width:13.0px;background:#9cdcfe"></div>
<div class="mm" style="left:1103.0px;top:130px;width:1.0px;background:#d4d4d4"></div>
<div class="mm" style="left:1105.0px;top:130px;width:1.0px;background:#d4d4d4"></div>
<div class="mm" style="left:1106.0px;top:130px;width:1.0px;background:#d4d4d4"></div>
<div class="mm" style="left:1107.0px;top:130px;width:1.0px;background:#d4d4d4"></div>
<div class="mm" style="left:1090.0px;top:132px;width:17.0px;background:#9cdcfe"></div>
<div class="mm" style="left:1107.0px;top:132px;width:1.0px;background:#d4d4d4"></div>
<div class="mm" style="left:1109.0px;top:132px;width:5.0px;background:#569cd6"></div>
<div class="mm" style="left:1114.0px;top:132px;width:1.0px;background:#d4d4d4"></div>
<div class="mm" style="left:1090.0px;top:134px;width:8.0px;background:#9cdcfe"></div>
<div class="mm" style="left:1098.0px;top:134px;width:1.0px;background:#d4d4d4"></div>
<div class="mm" style="left:1100.0px;top:134px;width:5.0px;background:#ce9178"></div>
<div class="mm" style="left:1105.0px;top:134px;width:1.0px;background:#d4d4d4"></div>
<div class="mm" style="left:1090.0px;top:136px;width:16.0px;background:#9cdcfe"></div>
<div class="mm" style="left:1106.0px;top:136px;width:1.0px;background:#d4d4d4"></div>
<div class="mm" style="left:1108.0px;top:136px;width:52.0px;background:#ce9178"></div>
<div class="mm" style="left:1090.0px;top:138px;width:25.0px;background:#9cdcfe"></div>
<div class="mm" style="left:1115.0px;top:138px;width:1.0px;background:#d4d4d4"></div>
<div class="mm" style="left:1117.0px;top:138px;width:16.0px;background:#ce9178"></div>
<div class="mm" style="left:1133.0px;top:138px;width:1.0px;background:#d4d4d4"></div>
<div class="mm" style="left:1090.0px;top:140px;width:19.0px;background:#9cdcfe"></div>
<div class="mm" style="left:1109.0px;top:140px;width:1.0px;background:#d4d4d4"></div>
<div class="mm" style="left:1111.0px;top:140px;width:4.0px;background:#569cd6"></div>
<div class="mm" style="left:1115.0px;top:140px;width:1.0px;background:#d4d4d4"></div>
<div class="mm" style="left:1090.0px;top:142px;width:27.0px;background:#9cdcfe"></div>
<div class="mm" style="left:1117.0px;top:142px;width:1.0px;background:#d4d4d4"></div>
<div class="mm" style="left:1119.0px;top:142px;width:1.0px;background:#d4d4d4"></div>
<div class="mm" style="left:1094.0px;top:144px;width:1.0px;background:#d4d4d4"></div>
<div class="mm" style="left:1098.0px;top:146px;width:13.0px;background:#9cdcfe"></div>
<div class="mm" style="left:1111.0px;top:146px;width:1.0px;background:#d4d4d4"></div>
<div class="mm" style="left:1113.0px;top:146px;width:4.0px;background:#ce9178"></div>
<div class="mm" style="left:1118.0px;top:146px;width:13.0px;background:#ce9178"></div>
<div class="mm" style="left:1132.0px;top:146px;width:3.0px;background:#ce9178"></div>
<div class="mm" style="left:1136.0px;top:146px;width:4.0px;background:#ce9178"></div>
<div class="mm" style="left:1140.0px;top:146px;width:1.0px;background:#d4d4d4"></div>
<div class="mm" style="left:1098.0px;top:148px;width:6.0px;background:#9cdcfe"></div>
<div class="mm" style="left:1104.0px;top:148px;width:1.0px;background:#d4d4d4"></div>
<div class="mm" style="left:1106.0px;top:148px;width:4.0px;background:#ce9178"></div>
<div class="mm" style="left:1111.0px;top:148px;width:13.0px;background:#ce9178"></div>
<div class="mm" style="left:1125.0px;top:148px;width:3.0px;background:#ce9178"></div>
<div class="mm" style="left:1128.0px;top:148px;width:1.0px;background:#d4d4d4"></div>
<div class="mm" style="left:1098.0px;top:150px;width:16.0px;background:#9cdcfe"></div>
<div class="mm" style="left:1114.0px;top:150px;width:1.0px;background:#d4d4d4"></div>
<div class="mm" style="left:1116.0px;top:150px;width:4.0px;background:#569cd6"></div>
<div class="mm" style="left:1094.0px;top:152px;width:1.0px;background:#d4d4d4"></div>
<div class="mm" style="left:1095.0px;top:152px;width:1.0px;background:#d4d4d4"></div>
<div class="mm" style="left:1094.0px;top:154px;width:1.0px;background:#d4d4d4"></div>
<div class="mm" style="left:1098.0px;top:156px;width:13.0px;background:#9cdcfe"></div>
<div class="mm" style="left:1111.0px;top:156px;width:1.0px;background:#d4d4d4"></div>
<div class="mm" style="left:1113.0px;top:156px;width:4.0px;background:#ce9178"></div>
<div class="mm" style="left:1118.0px;top:156px;width:6.0px;background:#ce9178"></div>
<div class="mm" style="left:1125.0px;top:156px;width:9.0px;background:#ce9178"></div>
<div class="mm" style="left:1135.0px;top:156px;width:3.0px;background:#ce9178"></div>
<div class="mm" style="left:1139.0px;top:156px;width:4.0px;background:#ce9178"></div>
<div class="mm" style="left:1143.0px;top:156px;width:1.0px;background:#d4d4d4"></div>
<div class="mm" style="left:1098.0px;top:158px;width:6.0px;background:#9cdcfe"></div>
<div class="mm" style="left:1104.0px;top:158px;width:1.0px;background:#d4d4d4"></div>
<div class="mm" style="left:1106.0px;top:158px;width:4.0px;background:#ce9178"></div>
<div class="mm" style="left:1111.0px;top:158px;width:6.0px;background:#ce9178"></div>
<div class="mm" style="left:1118.0px;top:158px;width:9.0px;background:#ce9178"></div>
<div class="mm" style="left:1128.0px;top:158px;width:24.0px;background:#ce9178"></div>
<div class="mm" style="left:1152.0px;top:158px;width:1.0px;background:#d4d4d4"></div>
<div class="mm" style="left:1098.0px;top:160px;width:16.0px;background:#9cdcfe"></div>
<div class="mm" style="left:1114.0px;top:160px;width:1.0px;background:#d4d4d4"></div>
<div class="mm" style="left:1116.0px;top:160px;width:5.0px;background:#569cd6"></div>
<div class="mm" style="left:1094.0px;top:162px;width:1.0px;background:#d4d4d4"></div>
<div class="mm" style="left:1095.0px;top:162px;width:1.0px;background:#d4d4d4"></div>
<div class="mm" style="left:1094.0px;top:164px;width:1.0px;background:#d4d4d4"></div>
<div class="mm" style="left:1098.0px;top:166px;width:13.0px;background:#9cdcfe"></div>
<div class="mm" style="left:1111.0px;top:166px;width:1.0px;background:#d4d4d4"></div>
<div class="mm" style="left:1113.0px;top:166px;width:4.0px;background:#ce9178"></div>
<div class="mm" style="left:1118.0px;top:166px;width:7.0px;background:#ce9178"></div>
<div class="mm" style="left:1126.0px;top:166px;width:3.0px;background:#ce9178"></div>
<div class="mm" style="left:1130.0px;top:166px;width:4.0px;background:#ce9178"></div>
<div class="mm" style="left:1134.0px;top:166px;width:1.0px;background:#d4d4d4"></div>
<div class="mm" style="left:1098.0px;top:168px;width:6.0px;background:#9cdcfe"></div>
<div class="mm" style="left:1104.0px;top:168px;width:1.0px;background:#d4d4d4"></div>
<div class="mm" style="left:1106.0px;top:168px;width:4.0px;background:#ce9178"></div>
<div class="mm" style="left:1111.0px;top:168px;width:7.0px;background:#ce9178"></div>
<div class="mm" style="left:1119.0px;top:168px;width:41.0px;background:#ce9178"></div>
<div class="mm" style="left:1098.0px;top:170px;width:16.0px;background:#9cdcfe"></div>
<div class="mm" style="left:1114.0px;top:170px;width:1.0px;background:#d4d4d4"></div>
<div class="mm" style="left:1116.0px;top:170px;width:4.0px;background:#569cd6"></div>
<div class="mm" style="left:1094.0px;top:172px;width:1.0px;background:#d4d4d4"></div>
<div class="mm" style="left:1095.0px;top:172px;width:1.0px;background:#d4d4d4"></div>
<div class="mm" style="left:1094.0px;top:174px;width:1.0px;background:#d4d4d4"></div>
<div class="mm" style="left:1098.0px;top:176px;width:13.0px;background:#9cdcfe"></div>
<div class="mm" style="left:1111.0px;top:176px;width:1.0px;background:#d4d4d4"></div>
<div class="mm" style="left:1113.0px;top:176px;width:4.0px;background:#ce9178"></div>
<div class="mm" style="left:1118.0px;top:176px;width:5.0px;background:#ce9178"></div>
<div class="mm" style="left:1124.0px;top:176px;width:4.0px;background:#ce9178"></div>
<div class="mm" style="left:1129.0px;top:176px;width:3.0px;background:#ce9178"></div>
<div class="mm" style="left:1133.0px;top:176px;width:4.0px;background:#ce9178"></div>
<div class="mm" style="left:1137.0px;top:176px;width:1.0px;background:#d4d4d4"></div>
<div class="mm" style="left:1098.0px;top:178px;width:6.0px;background:#9cdcfe"></div>
<div class="mm" style="left:1104.0px;top:178px;width:1.0px;background:#d4d4d4"></div>
<div class="mm" style="left:1106.0px;top:178px;width:4.0px;background:#ce9178"></div>
<div class="mm" style="left:1111.0px;top:178px;width:17.0px;background:#ce9178"></div>
<div class="mm" style="left:1129.0px;top:178px;width:31.0px;background:#ce9178"></div>
<div class="mm" style="left:1098.0px;top:180px;width:16.0px;background:#9cdcfe"></div>
<div class="mm" style="left:1114.0px;top:180px;width:1.0px;background:#d4d4d4"></div>
<div class="mm" style="left:1116.0px;top:180px;width:4.0px;background:#569cd6"></div>
<div class="mm" style="left:1094.0px;top:182px;width:1.0px;background:#d4d4d4"></div>
<div class="mm" style="left:1090.0px;top:184px;width:1.0px;background:#d4d4d4"></div>
<div class="mm" style="left:1091.0px;top:184px;width:1.0px;background:#d4d4d4"></div>
<div class="mm" style="left:1090.0px;top:186px;width:15.0px;background:#9cdcfe"></div>
<div class="mm" style="left:1105.0px;top:186px;width:1.0px;background:#d4d4d4"></div>
<div class="mm" style="left:1107.0px;top:186px;width:1.0px;background:#d4d4d4"></div>
<div class="mm" style="left:1094.0px;top:188px;width:1.0px;background:#d4d4d4"></div>
<div class="mm" style="left:1098.0px;top:190px;width:13.0px;background:#9cdcfe"></div>
<div class="mm" style="left:1111.0px;top:190px;width:1.0px;background:#d4d4d4"></div>
<div class="mm" style="left:1113.0px;top:190px;width:7.0px;background:#ce9178"></div>
<div class="mm" style="left:1121.0px;top:190px;width:15.0px;background:#ce9178"></div>
<div class="mm" style="left:1137.0px;top:190px;width:3.0px;background:#ce9178"></div>
<div class="mm" style="left:1141.0px;top:190px;width:4.0px;background:#ce9178"></div>
<div class="mm" style="left:1145.0px;top:190px;width:1.0px;background:#d4d4d4"></div>
<div class="mm" style="left:1098.0px;top:192px;width:6.0px;background:#9cdcfe"></div>
<div class="mm" style="left:1104.0px;top:192px;width:1.0px;background:#d4d4d4"></div>
<div class="mm" style="left:1106.0px;top:192px;width:25.0px;background:#ce9178"></div>
<div class="mm" style="left:1131.0px;top:192px;width:1.0px;background:#d4d4d4"></div>
<div class="mm" style="left:1098.0px;top:194px;width:16.0px;background:#9cdcfe"></div>
<div class="mm" style="left:1114.0px;top:194px;width:1.0px;background:#d4d4d4"></div>
<div class="mm" style="left:1116.0px;top:194px;width:4.0px;background:#569cd6"></div>
<div class="mm" style="left:1094.0px;top:196px;width:1.0px;background:#d4d4d4"></div>
<div class="mm" style="left:1095.0px;top:196px;width:1.0px;background:#d4d4d4"></div>
<div class="mm" style="left:1094.0px;top:198px;width:1.0px;background:#d4d4d4"></div>
<div class="mm" style="left:1098.0px;top:200px;width:13.0px;background:#9cdcfe"></div>
<div class="mm" style="left:1111.0px;top:200px;width:1.0px;background:#d4d4d4"></div>
<div class="mm" style="left:1113.0px;top:200px;width:4.0px;background:#ce9178"></div>
<div class="mm" style="left:1118.0px;top:200px;width:11.0px;background:#ce9178"></div>
<div class="mm" style="left:1130.0px;top:200px;width:6.0px;background:#ce9178"></div>
<div class="mm" style="left:1137.0px;top:200px;width:2.0px;background:#ce9178"></div>
<div class="mm" style="left:1140.0px;top:200px;width:6.0px;background:#ce9178"></div>
<div class="mm" style="left:1146.0px;top:200px;width:1.0px;background:#d4d4d4"></div>
<div class="mm" style="left:1098.0px;top:202px;width:6.0px;background:#9cdcfe"></div>
<div class="mm" style="left:1104.0px;top:202px;width:1.0px;background:#d4d4d4"></div>
<div class="mm" style="left:1106.0px;top:202px;width:9.0px;background:#ce9178"></div>
<div class="mm" style="left:1116.0px;top:202px;width:18.0px;background:#ce9178"></div>
<div class="mm" style="left:1135.0px;top:202px;width:6.0px;background:#ce9178"></div>
<div class="mm" style="left:1141.0px;top:202px;width:1.0px;background:#d4d4d4"></div>
<div class="mm" style="left:1098.0px;top:204px;width:16.0px;background:#9cdcfe"></div>
<div class="mm" style="left:1114.0px;top:204px;width:1.0px;background:#d4d4d4"></div>
<div class="mm" style="left:1116.0px;top:204px;width:4.0px;background:#569cd6"></div>
<div class="mm" style="left:1094.0px;top:206px;width:1.0px;background:#d4d4d4"></div>
<div class="mm" style="left:1090.0px;top:208px;width:1.0px;background:#d4d4d4"></div>
<div class="mm" style="left:1086.0px;top:210px;width:1.0px;background:#d4d4d4"></div>
<div class="mm" style="left:1082.0px;top:212px;width:1.0px;background:#d4d4d4"></div>
<div class="mm" style="left:1078.0px;top:214px;width:1.0px;background:#d4d4d4"></div> etc -->
<div class="abs" style="left:1069px;top:92px;width:4px;height:654px;background:linear-gradient(to right,#131313,#1e1e1e)"></div>
<div class="mm" style="left:1078.0px;top:92px;width:1.0px;background:#d4d4d4"></div>
<div class="mm" style="left:1082.0px;top:94px;width:9.0px;background:#9cdcfe"></div>
<div class="mm" style="left:1091.0px;top:94px;width:1.0px;background:#d4d4d4"></div>
<div class="mm" style="left:1093.0px;top:94px;width:7.0px;background:#ce9178"></div>
<div class="mm" style="left:1100.0px;top:94px;width:1.0px;background:#d4d4d4"></div>
<div class="mm" style="left:1082.0px;top:96px;width:16.0px;background:#9cdcfe"></div>
<div class="mm" style="left:1098.0px;top:96px;width:1.0px;background:#d4d4d4"></div>
<div class="mm" style="left:1100.0px;top:96px;width:1.0px;background:#d4d4d4"></div>
<div class="mm" style="left:1086.0px;top:98px;width:1.0px;background:#d4d4d4"></div>
<div class="mm" style="left:1090.0px;top:100px;width:6.0px;background:#9cdcfe"></div>
<div class="mm" style="left:1096.0px;top:100px;width:1.0px;background:#d4d4d4"></div>
<div class="mm" style="left:1098.0px;top:100px;width:6.0px;background:#ce9178"></div>
<div class="mm" style="left:1105.0px;top:100px;width:6.0px;background:#ce9178"></div>
<div class="mm" style="left:1112.0px;top:100px;width:13.0px;background:#ce9178"></div>
<div class="mm" style="left:1125.0px;top:100px;width:1.0px;background:#d4d4d4"></div>
<div class="mm" style="left:1090.0px;top:102px;width:6.0px;background:#9cdcfe"></div>
<div class="mm" style="left:1096.0px;top:102px;width:1.0px;background:#d4d4d4"></div>
<div class="mm" style="left:1098.0px;top:102px;width:8.0px;background:#ce9178"></div>
<div class="mm" style="left:1106.0px;top:102px;width:1.0px;background:#d4d4d4"></div>
<div class="mm" style="left:1090.0px;top:104px;width:9.0px;background:#9cdcfe"></div>
<div class="mm" style="left:1099.0px;top:104px;width:1.0px;background:#d4d4d4"></div>
<div class="mm" style="left:1101.0px;top:104px;width:8.0px;background:#ce9178"></div>
<div class="mm" style="left:1109.0px;top:104px;width:1.0px;background:#d4d4d4"></div>
<div class="mm" style="left:1090.0px;top:106px;width:9.0px;background:#9cdcfe"></div>
<div class="mm" style="left:1099.0px;top:106px;width:1.0px;background:#d4d4d4"></div>
<div class="mm" style="left:1101.0px;top:106px;width:59.0px;background:#ce9178"></div>
<div class="mm" style="left:1090.0px;top:108px;width:6.0px;background:#9cdcfe"></div>
<div class="mm" style="left:1096.0px;top:108px;width:1.0px;background:#d4d4d4"></div>
<div class="mm" style="left:1098.0px;top:108px;width:1.0px;background:#d4d4d4"></div>
<div class="mm" style="left:1094.0px;top:110px;width:7.0px;background:#ce9178"></div>
<div class="mm" style="left:1101.0px;top:110px;width:1.0px;background:#d4d4d4"></div>
<div class="mm" style="left:1094.0px;top:112px;width:30.0px;background:#ce9178"></div>
<div class="mm" style="left:1090.0px;top:114px;width:1.0px;background:#d4d4d4"></div>
<div class="mm" style="left:1091.0px;top:114px;width:1.0px;background:#d4d4d4"></div>
<div class="mm" style="left:1090.0px;top:116px;width:16.0px;background:#9cdcfe"></div>
<div class="mm" style="left:1106.0px;top:116px;width:1.0px;background:#d4d4d4"></div>
<div class="mm" style="left:1108.0px;top:116px;width:1.0px;background:#d4d4d4"></div>
<div class="mm" style="left:1094.0px;top:118px;width:9.0px;background:#9cdcfe"></div>
<div class="mm" style="left:1103.0px;top:118px;width:1.0px;background:#d4d4d4"></div>
<div class="mm" style="left:1105.0px;top:118px;width:4.0px;background:#569cd6"></div>
<div class="mm" style="left:1109.0px;top:118px;width:1.0px;background:#d4d4d4"></div>
<div class="mm" style="left:1094.0px;top:120px;width:15.0px;background:#9cdcfe"></div>
<div class="mm" style="left:1109.0px;top:120px;width:1.0px;background:#d4d4d4"></div>
<div class="mm" style="left:1111.0px;top:120px;width:2.0px;background:#ce9178"></div>
<div class="mm" style="left:1090.0px;top:122px;width:1.0px;background:#d4d4d4"></div>
<div class="mm" style="left:1091.0px;top:122px;width:1.0px;background:#d4d4d4"></div>
<div class="mm" style="left:1090.0px;top:124px;width:27.0px;background:#9cdcfe"></div>
<div class="mm" style="left:1117.0px;top:124px;width:1.0px;background:#d4d4d4"></div>
<div class="mm" style="left:1119.0px;top:124px;width:41.0px;background:#ce9178"></div>
<div class="mm" style="left:1090.0px;top:126px;width:13.0px;background:#9cdcfe"></div>
<div class="mm" style="left:1103.0px;top:126px;width:1.0px;background:#d4d4d4"></div>
<div class="mm" style="left:1105.0px;top:126px;width:4.0px;background:#569cd6"></div>
<div class="mm" style="left:1109.0px;top:126px;width:1.0px;background:#d4d4d4"></div>
<div class="mm" style="left:1090.0px;top:128px;width:5.0px;background:#9cdcfe"></div>
<div class="mm" style="left:1095.0px;top:128px;width:1.0px;background:#d4d4d4"></div>
<div class="mm" style="left:1097.0px;top:128px;width:16.0px;background:#ce9178"></div>
<div class="mm" style="left:1113.0px;top:128px;width:1.0px;background:#d4d4d4"></div>
<div class="mm" style="left:1090.0px;top:130px;width:13.0px;background:#9cdcfe"></div>
<div class="mm" style="left:1103.0px;top:130px;width:1.0px;background:#d4d4d4"></div>
<div class="mm" style="left:1105.0px;top:130px;width:1.0px;background:#d4d4d4"></div>
<div class="mm" style="left:1106.0px;top:130px;width:1.0px;background:#d4d4d4"></div>
<div class="mm" style="left:1107.0px;top:130px;width:1.0px;background:#d4d4d4"></div>
<div class="mm" style="left:1090.0px;top:132px;width:17.0px;background:#9cdcfe"></div>
<div class="mm" style="left:1107.0px;top:132px;width:1.0px;background:#d4d4d4"></div>
<div class="mm" style="left:1109.0px;top:132px;width:5.0px;background:#569cd6"></div>
<div class="mm" style="left:1114.0px;top:132px;width:1.0px;background:#d4d4d4"></div>
<div class="mm" style="left:1090.0px;top:134px;width:8.0px;background:#9cdcfe"></div>
<div class="mm" style="left:1098.0px;top:134px;width:1.0px;background:#d4d4d4"></div>
<div class="mm" style="left:1100.0px;top:134px;width:5.0px;background:#ce9178"></div>
<div class="mm" style="left:1105.0px;top:134px;width:1.0px;background:#d4d4d4"></div>
<div class="mm" style="left:1090.0px;top:136px;width:16.0px;background:#9cdcfe"></div>
<div class="mm" style="left:1106.0px;top:136px;width:1.0px;background:#d4d4d4"></div>
<div class="mm" style="left:1108.0px;top:136px;width:52.0px;background:#ce9178"></div>
<div class="mm" style="left:1090.0px;top:138px;width:25.0px;background:#9cdcfe"></div>
<div class="mm" style="left:1115.0px;top:138px;width:1.0px;background:#d4d4d4"></div>
<div class="mm" style="left:1117.0px;top:138px;width:16.0px;background:#ce9178"></div>
<div class="mm" style="left:1133.0px;top:138px;width:1.0px;background:#d4d4d4"></div>
<div class="mm" style="left:1090.0px;top:140px;width:19.0px;background:#9cdcfe"></div>
<div class="mm" style="left:1109.0px;top:140px;width:1.0px;background:#d4d4d4"></div>
<div class="mm" style="left:1111.0px;top:140px;width:4.0px;background:#569cd6"></div>
<div class="mm" style="left:1115.0px;top:140px;width:1.0px;background:#d4d4d4"></div>
<div class="mm" style="left:1090.0px;top:142px;width:27.0px;background:#9cdcfe"></div>
<div class="mm" style="left:1117.0px;top:142px;width:1.0px;background:#d4d4d4"></div>
<div class="mm" style="left:1119.0px;top:142px;width:1.0px;background:#d4d4d4"></div>
<div class="mm" style="left:1094.0px;top:144px;width:1.0px;background:#d4d4d4"></div>
<div class="mm" style="left:1098.0px;top:146px;width:13.0px;background:#9cdcfe"></div>
<div class="mm" style="left:1111.0px;top:146px;width:1.0px;background:#d4d4d4"></div>
<div class="mm" style="left:1113.0px;top:146px;width:4.0px;background:#ce9178"></div>
<div class="mm" style="left:1118.0px;top:146px;width:13.0px;background:#ce9178"></div>
<div class="mm" style="left:1132.0px;top:146px;width:3.0px;background:#ce9178"></div>
<div class="mm" style="left:1136.0px;top:146px;width:4.0px;background:#ce9178"></div>
<div class="mm" style="left:1140.0px;top:146px;width:1.0px;background:#d4d4d4"></div>
<div class="mm" style="left:1098.0px;top:148px;width:6.0px;background:#9cdcfe"></div>
<div class="mm" style="left:1104.0px;top:148px;width:1.0px;background:#d4d4d4"></div>
<div class="mm" style="left:1106.0px;top:148px;width:4.0px;background:#ce9178"></div>
<div class="mm" style="left:1111.0px;top:148px;width:13.0px;background:#ce9178"></div>
<div class="mm" style="left:1125.0px;top:148px;width:3.0px;background:#ce9178"></div>
<div class="mm" style="left:1128.0px;top:148px;width:1.0px;background:#d4d4d4"></div>
<div class="mm" style="left:1098.0px;top:150px;width:16.0px;background:#9cdcfe"></div>
<div class="mm" style="left:1114.0px;top:150px;width:1.0px;background:#d4d4d4"></div>
<div class="mm" style="left:1116.0px;top:150px;width:4.0px;background:#569cd6"></div>
<div class="mm" style="left:1094.0px;top:152px;width:1.0px;background:#d4d4d4"></div>
<div class="mm" style="left:1095.0px;top:152px;width:1.0px;background:#d4d4d4"></div>
<div class="mm" style="left:1094.0px;top:154px;width:1.0px;background:#d4d4d4"></div>
<div class="mm" style="left:1098.0px;top:156px;width:13.0px;background:#9cdcfe"></div>
<div class="mm" style="left:1111.0px;top:156px;width:1.0px;background:#d4d4d4"></div>
<div class="mm" style="left:1113.0px;top:156px;width:4.0px;background:#ce9178"></div>
<div class="mm" style="left:1118.0px;top:156px;width:6.0px;background:#ce9178"></div>
<div class="mm" style="left:1125.0px;top:156px;width:9.0px;background:#ce9178"></div>
<div class="mm" style="left:1135.0px;top:156px;width:3.0px;background:#ce9178"></div>
<div class="mm" style="left:1139.0px;top:156px;width:4.0px;background:#ce9178"></div>
<div class="mm" style="left:1143.0px;top:156px;width:1.0px;background:#d4d4d4"></div>
<div class="mm" style="left:1098.0px;top:158px;width:6.0px;background:#9cdcfe"></div>
<div class="mm" style="left:1104.0px;top:158px;width:1.0px;background:#d4d4d4"></div>
<div class="mm" style="left:1106.0px;top:158px;width:4.0px;background:#ce9178"></div>
<div class="mm" style="left:1111.0px;top:158px;width:6.0px;background:#ce9178"></div>
<div class="mm" style="left:1118.0px;top:158px;width:9.0px;background:#ce9178"></div>
<div class="mm" style="left:1128.0px;top:158px;width:24.0px;background:#ce9178"></div>
<div class="mm" style="left:1152.0px;top:158px;width:1.0px;background:#d4d4d4"></div>
<div class="mm" style="left:1098.0px;top:160px;width:16.0px;background:#9cdcfe"></div>
<div class="mm" style="left:1114.0px;top:160px;width:1.0px;background:#d4d4d4"></div>
<div class="mm" style="left:1116.0px;top:160px;width:5.0px;background:#569cd6"></div>
<div class="mm" style="left:1094.0px;top:162px;width:1.0px;background:#d4d4d4"></div>
<div class="mm" style="left:1095.0px;top:162px;width:1.0px;background:#d4d4d4"></div>
<div class="mm" style="left:1094.0px;top:164px;width:1.0px;background:#d4d4d4"></div>
<div class="mm" style="left:1098.0px;top:166px;width:13.0px;background:#9cdcfe"></div>
<div class="mm" style="left:1111.0px;top:166px;width:1.0px;background:#d4d4d4"></div>
<div class="mm" style="left:1113.0px;top:166px;width:4.0px;background:#ce9178"></div>
<div class="mm" style="left:1118.0px;top:166px;width:7.0px;background:#ce9178"></div>
<div class="mm" style="left:1126.0px;top:166px;width:3.0px;background:#ce9178"></div>
<div class="mm" style="left:1130.0px;top:166px;width:4.0px;background:#ce9178"></div>
<div class="mm" style="left:1134.0px;top:166px;width:1.0px;background:#d4d4d4"></div>
<div class="mm" style="left:1098.0px;top:168px;width:6.0px;background:#9cdcfe"></div>
<div class="mm" style="left:1104.0px;top:168px;width:1.0px;background:#d4d4d4"></div>
<div class="mm" style="left:1106.0px;top:168px;width:4.0px;background:#ce9178"></div>
<div class="mm" style="left:1111.0px;top:168px;width:7.0px;background:#ce9178"></div>
<div class="mm" style="left:1119.0px;top:168px;width:41.0px;background:#ce9178"></div>
<div class="mm" style="left:1098.0px;top:170px;width:16.0px;background:#9cdcfe"></div>
<div class="mm" style="left:1114.0px;top:170px;width:1.0px;background:#d4d4d4"></div>
<div class="mm" style="left:1116.0px;top:170px;width:4.0px;background:#569cd6"></div>
<div class="mm" style="left:1094.0px;top:172px;width:1.0px;background:#d4d4d4"></div>
<div class="mm" style="left:1095.0px;top:172px;width:1.0px;background:#d4d4d4"></div>
<div class="mm" style="left:1094.0px;top:174px;width:1.0px;background:#d4d4d4"></div>
<div class="mm" style="left:1098.0px;top:176px;width:13.0px;background:#9cdcfe"></div>
<div class="mm" style="left:1111.0px;top:176px;width:1.0px;background:#d4d4d4"></div>
<div class="mm" style="left:1113.0px;top:176px;width:4.0px;background:#ce9178"></div>
<div class="mm" style="left:1118.0px;top:176px;width:5.0px;background:#ce9178"></div>
<div class="mm" style="left:1124.0px;top:176px;width:4.0px;background:#ce9178"></div>
<div class="mm" style="left:1129.0px;top:176px;width:3.0px;background:#ce9178"></div>
<div class="mm" style="left:1133.0px;top:176px;width:4.0px;background:#ce9178"></div>
<div class="mm" style="left:1137.0px;top:176px;width:1.0px;background:#d4d4d4"></div>
<div class="mm" style="left:1098.0px;top:178px;width:6.0px;background:#9cdcfe"></div>
<div class="mm" style="left:1104.0px;top:178px;width:1.0px;background:#d4d4d4"></div>
<div class="mm" style="left:1106.0px;top:178px;width:4.0px;background:#ce9178"></div>
<div class="mm" style="left:1111.0px;top:178px;width:17.0px;background:#ce9178"></div>
<div class="mm" style="left:1129.0px;top:178px;width:31.0px;background:#ce9178"></div>
<div class="mm" style="left:1098.0px;top:180px;width:16.0px;background:#9cdcfe"></div>
<div class="mm" style="left:1114.0px;top:180px;width:1.0px;background:#d4d4d4"></div>
<div class="mm" style="left:1116.0px;top:180px;width:4.0px;background:#569cd6"></div>
<div class="mm" style="left:1094.0px;top:182px;width:1.0px;background:#d4d4d4"></div>
<div class="mm" style="left:1090.0px;top:184px;width:1.0px;background:#d4d4d4"></div>
<div class="mm" style="left:1091.0px;top:184px;width:1.0px;background:#d4d4d4"></div>
<div class="mm" style="left:1090.0px;top:186px;width:15.0px;background:#9cdcfe"></div>
<div class="mm" style="left:1105.0px;top:186px;width:1.0px;background:#d4d4d4"></div>
<div class="mm" style="left:1107.0px;top:186px;width:1.0px;background:#d4d4d4"></div>
<div class="mm" style="left:1094.0px;top:188px;width:1.0px;background:#d4d4d4"></div>
<div class="mm" style="left:1098.0px;top:190px;width:13.0px;background:#9cdcfe"></div>
<div class="mm" style="left:1111.0px;top:190px;width:1.0px;background:#d4d4d4"></div>
<div class="mm" style="left:1113.0px;top:190px;width:7.0px;background:#ce9178"></div>
<div class="mm" style="left:1121.0px;top:190px;width:15.0px;background:#ce9178"></div>
<div class="mm" style="left:1137.0px;top:190px;width:3.0px;background:#ce9178"></div>
<div class="mm" style="left:1141.0px;top:190px;width:4.0px;background:#ce9178"></div>
<div class="mm" style="left:1145.0px;top:190px;width:1.0px;background:#d4d4d4"></div>
<div class="mm" style="left:1098.0px;top:192px;width:6.0px;background:#9cdcfe"></div>
<div class="mm" style="left:1104.0px;top:192px;width:1.0px;background:#d4d4d4"></div>
<div class="mm" style="left:1106.0px;top:192px;width:25.0px;background:#ce9178"></div>
<div class="mm" style="left:1131.0px;top:192px;width:1.0px;background:#d4d4d4"></div>
<div class="mm" style="left:1098.0px;top:194px;width:16.0px;background:#9cdcfe"></div>
<div class="mm" style="left:1114.0px;top:194px;width:1.0px;background:#d4d4d4"></div>
<div class="mm" style="left:1116.0px;top:194px;width:4.0px;background:#569cd6"></div>
<div class="mm" style="left:1094.0px;top:196px;width:1.0px;background:#d4d4d4"></div>
<div class="mm" style="left:1095.0px;top:196px;width:1.0px;background:#d4d4d4"></div>
<div class="mm" style="left:1094.0px;top:198px;width:1.0px;background:#d4d4d4"></div>
<div class="mm" style="left:1098.0px;top:200px;width:13.0px;background:#9cdcfe"></div>
<div class="mm" style="left:1111.0px;top:200px;width:1.0px;background:#d4d4d4"></div>
<div class="mm" style="left:1113.0px;top:200px;width:4.0px;background:#ce9178"></div>
<div class="mm" style="left:1118.0px;top:200px;width:11.0px;background:#ce9178"></div>
<div class="mm" style="left:1130.0px;top:200px;width:6.0px;background:#ce9178"></div>
<div class="mm" style="left:1137.0px;top:200px;width:2.0px;background:#ce9178"></div>
<div class="mm" style="left:1140.0px;top:200px;width:6.0px;background:#ce9178"></div>
<div class="mm" style="left:1146.0px;top:200px;width:1.0px;background:#d4d4d4"></div>
<div class="mm" style="left:1098.0px;top:202px;width:6.0px;background:#9cdcfe"></div>
<div class="mm" style="left:1104.0px;top:202px;width:1.0px;background:#d4d4d4"></div>
<div class="mm" style="left:1106.0px;top:202px;width:9.0px;background:#ce9178"></div>
<div class="mm" style="left:1116.0px;top:202px;width:18.0px;background:#ce9178"></div>
<div class="mm" style="left:1135.0px;top:202px;width:6.0px;background:#ce9178"></div>
<div class="mm" style="left:1141.0px;top:202px;width:1.0px;background:#d4d4d4"></div>
<div class="mm" style="left:1098.0px;top:204px;width:16.0px;background:#9cdcfe"></div>
<div class="mm" style="left:1114.0px;top:204px;width:1.0px;background:#d4d4d4"></div>
<div class="mm" style="left:1116.0px;top:204px;width:4.0px;background:#569cd6"></div>
<div class="mm" style="left:1094.0px;top:206px;width:1.0px;background:#d4d4d4"></div>
<div class="mm" style="left:1090.0px;top:208px;width:1.0px;background:#d4d4d4"></div>
<div class="mm" style="left:1086.0px;top:210px;width:1.0px;background:#d4d4d4"></div>
<div class="mm" style="left:1082.0px;top:212px;width:1.0px;background:#d4d4d4"></div>
<div class="mm" style="left:1078.0px;top:214px;width:1.0px;background:#d4d4d4"></div>
<div class="abs" style="left:1160px;top:327px;width:1px;height:419px;background:#2a2a2a"></div>
<div class="abs" style="left:1160px;top:92px;width:14px;height:235px;background:#454545;border-left:1px solid #505050"></div>
<div class="abs" style="left:1160px;top:105px;width:14px;height:2px;background:#a0a0a0"></div>
<div class="abs" style="left:443px;top:734px;width:247px;height:12px;background:rgba(121,121,121,0.4)"></div>
<div class="abs" style="left:972px;top:692px;width:84px;height:30px;background:#0e639c;color:#ffffff;font-size:13px;line-height:31px;text-align:center;border-radius:2px">添加配置...</div>
<!-- STATUS -->
<div id="status">
  <div class="abs" style="left:0;top:0;width:124px;height:22px;background:#16825d"></div>
  <svg style="left:12px;top:5px" width="11" height="12" viewBox="0 0 11 12"><path d="M0.8 11.2 L4.8 7.2 L0.8 3.2 M10.2 0.8 L6.2 4.8 L10.2 8.8" stroke="#ffffff" stroke-width="1.2" fill="none"/></svg>
  <span class="st" style="left:27px;letter-spacing:-0.85px">SSH: EPYCServer</span>
  <svg style="left:131px;top:4px" width="12" height="14" viewBox="0 0 12 14"><circle cx="2.5" cy="2.5" r="1.8" stroke="#fff" stroke-width="1.1" fill="none"/><circle cx="2.5" cy="11.5" r="1.8" stroke="#fff" stroke-width="1.1" fill="none"/><circle cx="9.5" cy="4.5" r="1.8" stroke="#fff" stroke-width="1.1" fill="none"/><path d="M2.5 4.3 V9.7 M9.5 6.3 C9.5 8.5 7 9 2.8 9.7" stroke="#fff" stroke-width="1.1" fill="none"/></svg>
  <span class="st" style="left:148px">tina</span>
  <svg style="left:173px;top:4px" width="14" height="14" viewBox="0 0 14 14"><path d="M2.6 5.8 A4.7 4.7 0 0 1 11.5 6.6 M11.4 8.2 A4.7 4.7 0 0 1 2.5 7.4" stroke="#fff" stroke-width="1.3" fill="none"/><path d="M9.4 6.2 H13.6 L11.5 8.8 Z M0.4 7.8 H4.6 L2.5 5.2 Z" fill="#fff"/></svg>
  <svg style="left:202px;top:5px" width="13" height="13" viewBox="0 0 13 13"><circle cx="6.5" cy="6.5" r="5.8" stroke="#fff" stroke-width="1.1" fill="none"/><path d="M4 4 L9 9 M9 4 L4 9" stroke="#fff" stroke-width="1.1"/></svg>
  <span class="st" style="left:218px">0</span>
  <svg style="left:229px;top:5px" width="13" height="12" viewBox="0 0 13 12"><path d="M6.5 0.8 L12.3 11.3 H0.7 Z M6.5 4.5 V8 M6.5 9 V10" stroke="#fff" stroke-width="1.1" fill="none"/></svg>
  <span class="st" style="left:245px">0</span>
  <svg style="left:269px;top:5px" width="12" height="12" viewBox="0 0 12 12"><path d="M2 1 A6 6 0 0 0 2 9 M10 1 A6 6 0 0 1 10 9 M3.5 2.5 A3.5 3.5 0 0 0 3.5 7.5 M8.5 2.5 A3.5 3.5 0 0 1 8.5 7.5 M6 5 L3.5 11.5 M6 5 L8.5 11.5 M4.5 9 H7.5" stroke="#fff" stroke-width="1" fill="none"/><circle cx="6" cy="5" r="1" fill="#fff"/></svg>
  <span class="st" style="left:285px">0</span>
  <svg style="left:307px;top:4px" width="14" height="14" viewBox="0 0 14 14"><path d="M4.5 1 L13 6.5 L6 11" stroke="#fff" stroke-width="1.1" fill="none"/><path d="M4.5 1 V6" stroke="#fff" stroke-width="1.1"/><ellipse cx="3.5" cy="10.5" rx="2.2" ry="2.6" stroke="#fff" stroke-width="1" fill="none"/><path d="M1 10 H6 M0.5 8 L1.7 9 M6.5 8 L5.3 9 M0.5 13 L1.7 12 M6.5 13 L5.3 12" stroke="#fff" stroke-width="0.9" fill="none"/></svg>
  <span class="st" style="left:325px;letter-spacing:-0.1px">(gdb) Launch sample_virvi (tina-v821)</span>
  <span class="st" style="left:793px">行 3，列 24</span>
  <span class="st" style="left:870px">空格: 4</span>
  <span class="st" style="left:923px;letter-spacing:-0.4px">UTF-8</span>
  <span class="st" style="left:971px">LF</span>
  <span class="st" style="left:996px">{ }</span>
  <span class="st" style="left:1016px;letter-spacing:-0.2px">JSON with Comments</span>
  <svg style="left:1147px;top:4px" width="13" height="14" viewBox="0 0 13 14"><path d="M6 1.5 C3 1.5 2 4 2 6.5 V9.5 L0.8 11.5 H11.2 L10 9.5 V7 M4.5 13 H7.5" stroke="#fff" stroke-width="1.1" fill="none"/><circle cx="10" cy="3" r="2.3" fill="#fff"/></svg>
</div>
</body></html>
